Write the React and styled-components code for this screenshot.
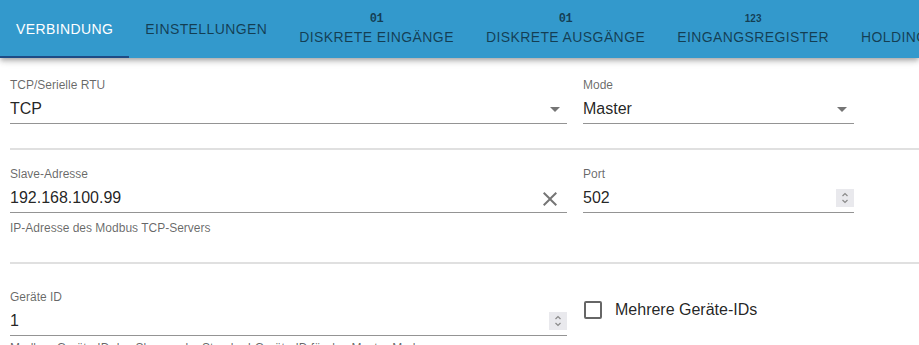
import React from "react";
import styled, { createGlobalStyle } from "styled-components";

const Global = createGlobalStyle`
  html, body { margin: 0; padding: 0; background: #fff; }
  body { font-family: "Liberation Sans", Arial, sans-serif; color: rgba(0,0,0,0.87); overflow: hidden; }
  * { box-sizing: border-box; }
`;

const Page = styled.div`
  width: 919px;
  height: 345px;
  overflow: hidden;
`;

const TabBar = styled.div`
  display: flex;
  flex-wrap: nowrap;
  height: 58px;
  background: #3399cc;
  box-shadow: 0 2px 4px -1px rgba(0,0,0,0.2), 0 4px 5px 0 rgba(0,0,0,0.14), 0 1px 10px 0 rgba(0,0,0,0.12);
  overflow: hidden;
  position: relative;
  z-index: 1;
`;

const Tab = styled.div`
  flex: 0 0 auto;
  height: 58px;
  padding: 0 16px;
  display: flex;
  flex-direction: column;
  align-items: center;
  justify-content: center;
  gap: 4px;
  border-bottom: 2px solid ${(p) => (p.$active ? "#1d4b85" : "transparent")};
  padding-top: 2px;
  color: ${(p) => (p.$active ? "#ffffff" : "rgba(0,0,0,0.6)")};
  white-space: nowrap;
`;

const TabLabel = styled.span`
  font-size: 14px;
  line-height: 16px;
  letter-spacing: 0.4px;
  text-transform: uppercase;
`;

const TabIcon = styled.span`
  font-family: ${(p) => (p.$mono ? '"Liberation Mono", "DejaVu Sans Mono", monospace' : '"Liberation Sans", Arial, sans-serif')};
  font-weight: 700;
  font-size: ${(p) => (p.$mono ? "12px" : "10px")};
  line-height: 12px;
  letter-spacing: ${(p) => (p.$mono ? "-0.5px" : "0")};
`;

const Form = styled.div`
  padding-left: 10px;
`;

const Row = styled.div`
  display: grid;
  grid-template-columns: 557px 271px;
  column-gap: 16px;
  align-items: start;
  padding-top: ${(p) => p.$top}px;
  padding-bottom: ${(p) => p.$bottom}px;
`;

const Divider = styled.div`
  height: 2px;
  background: #e0e0e0;
`;

const Field = styled.div`
  display: flex;
  flex-direction: column;
`;

const Label = styled.label`
  font-size: 12px;
  line-height: 14px;
  color: rgba(0,0,0,0.6);
`;

const InputRow = styled.div`
  display: flex;
  align-items: center;
  padding: 7px 0 5px;
  border-bottom: 1px solid rgba(0,0,0,0.42);
`;

const Value = styled.span`
  flex: 1;
  font-size: 16px;
  line-height: 19px;
  color: rgba(0,0,0,0.87);
`;

const IconBox = styled.span`
  display: flex;
  align-items: center;
  justify-content: center;
  height: 19px;
  width: 24px;
  margin-right: ${(p) => p.$mr || 0}px;
  color: rgba(0,0,0,0.54);
  svg { display: block; flex: 0 0 auto; margin-top: ${(p) => p.$mt || 0}px; }
`;

const Spinner = styled.span`
  width: 18px;
  height: 18px;
  background: #e9e9ed;
  display: flex;
  align-items: center;
  justify-content: center;
  color: #8a8a8a;
`;

const Helper = styled.p`
  margin: ${(p) => p.$mt ?? 5}px 0 0;
  font-size: 12px;
  line-height: 20px;
  color: rgba(0,0,0,0.6);
  white-space: nowrap;
`;

const CheckCell = styled.label`
  display: flex;
  align-items: center;
  gap: 13px;
  padding-top: 10px;
  padding-left: 1px;
`;

const Box = styled.span`
  width: 18px;
  height: 18px;
  border: 2px solid rgba(0,0,0,0.6);
  border-radius: 2px;
  flex: 0 0 auto;
`;

const CheckText = styled.span`
  font-size: 16px;
  line-height: 20px;
  color: rgba(0,0,0,0.87);
`;

const ArrowDrop = () => (
  <svg width="24" height="24" viewBox="0 0 24 24" fill="currentColor">
    <path d="M7 10l5 5 5-5z" />
  </svg>
);

const CloseIcon = () => (
  <svg width="24" height="24" viewBox="0 0 24 24" fill="currentColor">
    <path d="M19 6.41 17.59 5 12 10.59 6.41 5 5 6.41 10.59 12 5 17.59 6.41 19 12 13.41 17.59 19 19 17.59 13.41 12z" />
  </svg>
);

const SpinIcon = () => (
  <svg width="10" height="14" viewBox="0 0 10 14" fill="none" stroke="currentColor" strokeWidth="1.2">
    <path d="M2.5 5 5 2.5 7.5 5" />
    <path d="M2.5 9 5 11.5 7.5 9" />
  </svg>
);

const tabs = [
  { label: "Verbindung", active: true },
  { label: "Einstellungen" },
  { label: "Diskrete Eingänge", icon: "01", mono: true },
  { label: "Diskrete Ausgänge", icon: "01", mono: true },
  { label: "Eingangsregister", icon: "123" },
  { label: "Holding-Register", icon: "123" },
];

export default function App() {
  return (
    <Page>
      <Global />
      <TabBar>
        {tabs.map((t) => (
          <Tab key={t.label} $active={t.active}>
            {t.icon && <TabIcon $mono={t.mono}>{t.icon}</TabIcon>}
            <TabLabel>{t.label}</TabLabel>
          </Tab>
        ))}
      </TabBar>
      <Form>
        <Row $top={20} $bottom={24}>
          <Field>
            <Label>TCP/Serielle RTU</Label>
            <InputRow>
              <Value>TCP</Value>
              <IconBox><ArrowDrop /></IconBox>
            </InputRow>
          </Field>
          <Field>
            <Label>Mode</Label>
            <InputRow>
              <Value>Master</Value>
              <IconBox><ArrowDrop /></IconBox>
            </InputRow>
          </Field>
        </Row>
        <Divider />
        <Row $top={17} $bottom={24}>
          <Field>
            <Label>Slave-Adresse</Label>
            <InputRow>
              <Value>192.168.100.99</Value>
              <IconBox $mr={5} $mt={2}><CloseIcon /></IconBox>
            </InputRow>
            <Helper>IP-Adresse des Modbus TCP-Servers</Helper>
          </Field>
          <Field>
            <Label>Port</Label>
            <InputRow>
              <Value>502</Value>
              <Spinner><SpinIcon /></Spinner>
            </InputRow>
          </Field>
        </Row>
        <Divider />
        <Row $top={26} $bottom={10}>
          <Field>
            <Label>Geräte ID</Label>
            <InputRow>
              <Value>1</Value>
              <Spinner><SpinIcon /></Spinner>
            </InputRow>
            <Helper $mt={2}>Modbus-Geräte-ID des Slaves oder Standard-Geräte-ID für den Master-Modus</Helper>
          </Field>
          <CheckCell>
            <Box />
            <CheckText>Mehrere Geräte-IDs</CheckText>
          </CheckCell>
        </Row>
      </Form>
    </Page>
  );
}
